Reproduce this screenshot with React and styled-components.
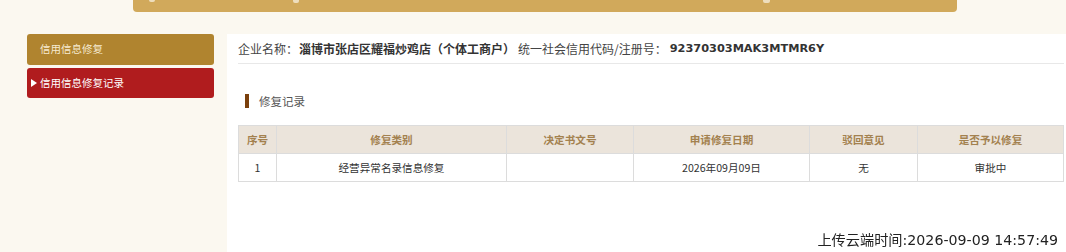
import React from "react";
import styled, { createGlobalStyle } from "styled-components";

const Global = createGlobalStyle`
  html, body { margin: 0; padding: 0; }
  body {
    background: #fbf8f0;
    font-family: "Noto Sans CJK SC", "Noto Sans", sans-serif;
    color: #333;
    height: 252px;
    overflow: hidden;
  }
`;

const Page = styled.div`
  display: flex;
  flex-direction: column;
  height: 252px;
`;

const TopBarWrap = styled.div`
  padding-left: 133px;
  width: 824px;
`;

const TopBar = styled.div`
  height: 12px;
  background: #d1a95b;
  border-radius: 0 0 4px 4px;
  display: flex;
  align-items: flex-start;
`;

const IconStub = styled.span`
  display: block;
  width: ${(p) => p.w}px;
  height: ${(p) => p.h}px;
  margin-left: ${(p) => p.ml}px;
  background: #f3e8cf;
  border-radius: 0 0 2px 2px;
  opacity: 0.85;
`;

const Main = styled.div`
  flex: 1;
  display: flex;
  align-items: stretch;
  margin-top: 22px;
  padding-left: 27px;
  gap: 13px;
  min-height: 0;
`;

const Nav = styled.nav`
  width: 187px;
  flex: none;
  display: flex;
  flex-direction: column;
  gap: 3px;
`;

const NavItem = styled.div`
  height: ${(p) => p.h}px;
  background: ${(p) => (p.active ? "#b01c1e" : "#b0842f")};
  color: ${(p) => (p.active ? "#ffffff" : "#f6ebd2")};
  border-radius: 3px;
  display: flex;
  align-items: center;
  padding-left: ${(p) => (p.active ? 4 : 13)}px;
  font-size: 10.5px;
  line-height: 1;
`;

const Arrow = styled.span`
  display: inline-block;
  width: 0;
  height: 0;
  border-top: 4px solid transparent;
  border-bottom: 4px solid transparent;
  border-left: 6px solid #ffffff;
  margin-right: 3px;
`;

const Content = styled.section`
  flex: 1;
  background: #ffffff;
  padding: 0 3px 0 11px;
  display: flex;
  flex-direction: column;
`;

const InfoRow = styled.div`
  height: 29px;
  border-bottom: 1px solid #e8e8e8;
  display: flex;
  align-items: center;
  font-size: 12px;
  color: #444;
  white-space: nowrap;
`;

const Label = styled.span`
  margin-left: ${(p) => p.ml || 0}px;
`;

const Value = styled.span`
  font-weight: bold;
  color: #333;
  margin-left: ${(p) => p.ml || 0}px;
`;

const Code = styled.span`
  font-family: "DejaVu Sans", "Noto Sans", sans-serif;
  font-weight: bold;
  font-size: 11.3px;
  color: #333;
  margin-left: 3px;
`;

const SectionTitle = styled.div`
  margin-top: 30px;
  margin-left: 7px;
  height: 14px;
  display: flex;
  align-items: center;
  gap: 10px;
  font-size: 11.5px;
  color: #555;
  &::before {
    content: "";
    display: block;
    width: 4px;
    height: 14px;
    background: #7b400c;
  }
`;

const Table = styled.table`
  margin-top: 17px;
  width: 825px;
  border-collapse: collapse;
  table-layout: fixed;
  font-size: 10.6px;
`;

const Th = styled.th`
  height: 27px;
  padding: 0;
  background: #ebe4db;
  color: #a3814f;
  font-weight: bold;
  border: 1px solid #dcdcdc;
  text-align: center;
`;

const Td = styled.td`
  height: 27px;
  padding: 0;
  color: #333;
  border: 1px solid #dcdcdc;
  text-align: center;
`;

const Stamp = styled.div`
  position: fixed;
  right: 8px;
  bottom: 3px;
  font-family: "DejaVu Sans", "Noto Sans CJK SC", sans-serif;
  font-size: 14.2px;
  color: #222;
  white-space: nowrap;
`;

const StampCjk = styled.span`
  font-family: "Noto Sans CJK SC", sans-serif;
`;

const columns = [
  { title: "序号", w: 38 },
  { title: "修复类别", w: 230 },
  { title: "决定书文号", w: 127 },
  { title: "申请修复日期", w: 176 },
  { title: "驳回意见", w: 108 },
  { title: "是否予以修复", w: 146 },
];

const rows = [["1", "经营异常名录信息修复", "", "2026年09月09日", "无", "审批中"]];

export default function App() {
  return (
    <>
      <Global />
      <Page>
        <TopBarWrap>
          <TopBar>
            <IconStub w={6} h={2} ml={16} />
            <IconStub w={6} h={3} ml={138} />
            <IconStub w={7} h={3} ml={464} />
          </TopBar>
        </TopBarWrap>
        <Main>
          <Nav>
            <NavItem h={31}>信用信息修复</NavItem>
            <NavItem h={30} active>
              <Arrow />
              信用信息修复记录
            </NavItem>
          </Nav>
          <Content>
            <InfoRow>
              <Label>企业名称：</Label>
              <Value ml={1}>淄博市张店区耀福炒鸡店（个体工商户）</Value>
              <Label ml={3}>统一社会信用代码/注册号：</Label>
              <Code>92370303MAK3MTMR6Y</Code>
            </InfoRow>
            <SectionTitle>修复记录</SectionTitle>
            <Table>
              <colgroup>
                {columns.map((c) => (
                  <col key={c.title} style={{ width: c.w }} />
                ))}
              </colgroup>
              <thead>
                <tr>
                  {columns.map((c) => (
                    <Th key={c.title}>{c.title}</Th>
                  ))}
                </tr>
              </thead>
              <tbody>
                {rows.map((r, i) => (
                  <tr key={i}>
                    {r.map((cell, j) => (
                      <Td key={j}>{cell}</Td>
                    ))}
                  </tr>
                ))}
              </tbody>
            </Table>
          </Content>
        </Main>
        <Stamp>
          <StampCjk>上传云端时间</StampCjk>:2026-09-09 14:57:49
        </Stamp>
      </Page>
    </>
  );
}
